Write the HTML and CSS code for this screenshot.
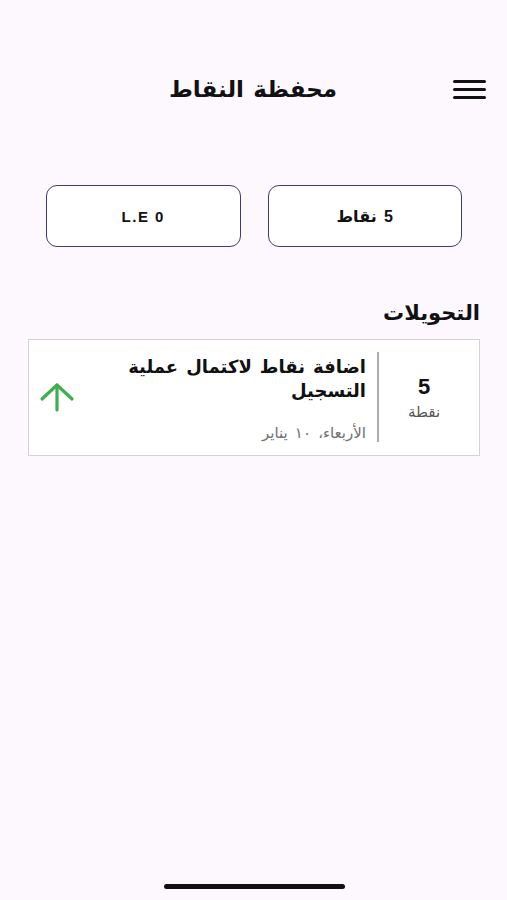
FILE: index.html
```html
<!DOCTYPE html>
<html lang="ar" dir="rtl">
<head>
  <meta charset="UTF-8" />
  <meta name="viewport" content="width=device-width, initial-scale=1.0" />
  <title>محفظة النقاط</title>
  <link rel="stylesheet" href="styles.css">
</head>
<body>
  <!-- ----------  HEADER  ---------- -->
  <header class="topbar">
    <button class="menu-btn" aria-label="menu">
      <span></span><span></span><span></span>
    </button>
    <h1>محفظة النقاط</h1>
    <span class="spacer"></span>
  </header>

  <!-- ----------  BALANCE  ---------- -->
  <section class="balance">
    <div class="balance-box">5 نقاط</div>
    <div class="balance-box" dir="ltr">L.E 0</div>
  </section>

  <!-- ----------  TRANSACTIONS  ---------- -->
  <section class="transfers">
    <h2>التحويلات</h2>

    <div class="tx-card">
      <div class="tx-points">
        <strong>5</strong>
        <span>نقطة</span>
      </div>
      <div class="tx-info">
        <p class="tx-title">اضافة نقاط لاكتمال عملية التسجيل</p>
        <p class="tx-date">الأربعاء، ١٠ يناير</p>
      </div>
      <svg class="tx-icon" width="38" height="30" viewBox="0 0 38 30" fill="none" stroke="#3fae4f" stroke-width="3.2" stroke-linecap="round" stroke-linejoin="round">
        <path d="M19 28V3"/>
        <path d="M4 17L19 3L34 17"/>
      </svg>
    </div>
  </section>

  <div class="home-bar"></div>
</body>
</html>
```

FILE: styles.css
```css
/* —————— RESET —————— */
*{margin:0;padding:0;box-sizing:border-box;font-family:"Liberation Sans","DejaVu Sans",sans-serif;}

body{
  width:507px;
  height:900px;
  background:#fdf8fd;
  color:#111;
  position:relative;
  overflow:hidden;
}

/* —————— HEADER —————— */
.topbar{
  display:grid;
  grid-template-columns:1fr auto 1fr;
  align-items:center;
  padding:76px 21px 0 20px;
}
.topbar h1{
  font-size:23px;
  font-weight:bold;
  word-spacing:3px;
}
.menu-btn{
  justify-self:start;
  width:33px;
  height:19px;
  display:flex;
  flex-direction:column;
  justify-content:space-between;
  background:none;
  border:none;
}
.menu-btn span{
  display:block;
  height:3px;
  background:#111;
  border-radius:2px;
}

/* —————— BALANCE —————— */
.balance{
  display:flex;
  gap:27px;
  padding:0 45px 0 46px;
  margin-top:82px;
}
.balance-box{
  flex:1;
  height:62px;
  display:flex;
  align-items:center;
  justify-content:center;
  border:1.5px solid #3d3a7e;
  border-radius:11px;
  background:#fff;
  font-size:16px;
  font-weight:bold;
  word-spacing:3px;
}
.balance-box[dir="ltr"]{font-size:15px;letter-spacing:1.5px;word-spacing:0;}

/* —————— TRANSACTIONS —————— */
.transfers{
  padding:0 27px 0 28px;
  margin-top:54px;
}
.transfers h2{
  font-size:21px;
  font-weight:bold;
  margin-bottom:14px;
}
.tx-card{
  display:flex;
  align-items:center;
  height:117px;
  background:#fff;
  border:1.5px solid #d3d3d3;
  padding:12px 10px 13px 0;
}
.tx-points{
  width:90px;
  display:flex;
  flex-direction:column;
  align-items:center;
  gap:3px;
}
.tx-points strong{font-size:22px;}
.tx-points span{font-size:15px;color:#555;}
.tx-info{
  flex:1;
  align-self:stretch;
  border-right:2px solid #aaa;
  padding:3px 11px 0 0;
  display:flex;
  flex-direction:column;
  justify-content:space-between;
}
.tx-title{
  font-size:18px;
  font-weight:bold;
  line-height:24px;
  width:260px;
  word-spacing:3px;
}
.tx-date{
  font-size:15px;
  color:#707070;
  word-spacing:3px;
}
.tx-icon{margin-left:9px;}

/* —————— HOME INDICATOR —————— */
.home-bar{
  position:absolute;
  left:164px;
  top:884px;
  width:181px;
  height:5px;
  border-radius:3px;
  background:#111;
}
```
